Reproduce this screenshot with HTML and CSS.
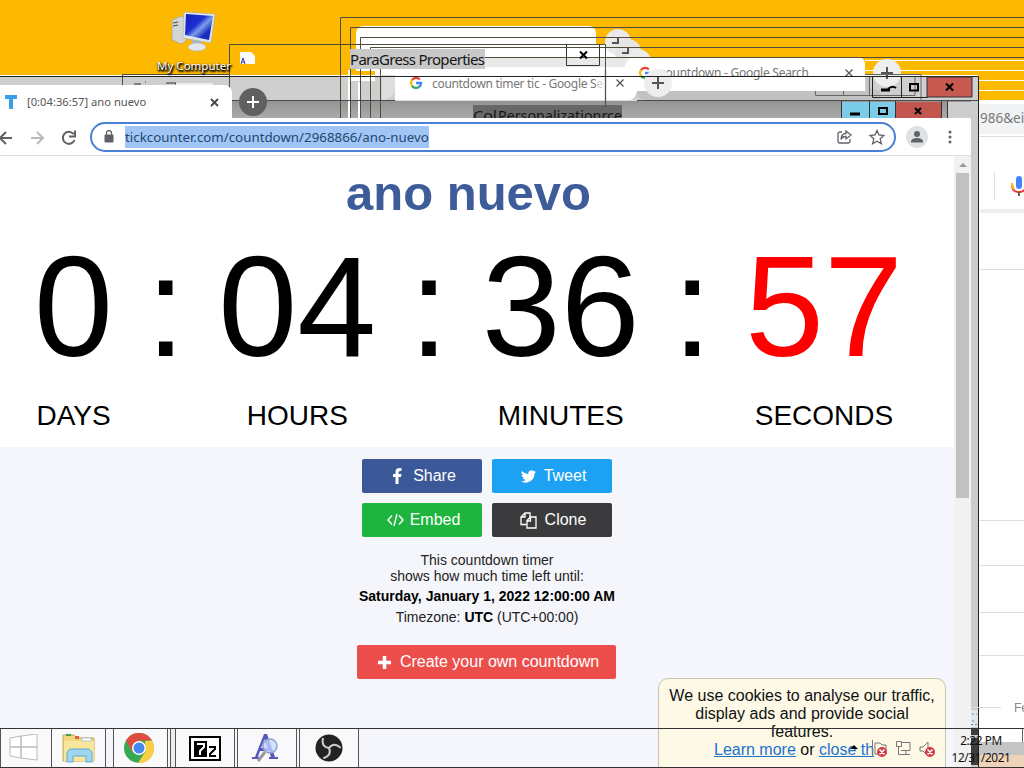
FILE: index.html
```html
<!DOCTYPE html>
<html lang="en">
<head>
<meta charset="utf-8">
<title>ano nuevo</title>
<link rel="stylesheet" href="styles.css">
</head>
<body>
<div class="desktop">
  <!-- Overlapping window frames -->
  <svg class="frames" width="1024" height="768" viewBox="0 0 1024 768">
    <defs>
      <linearGradient id="bar" x1="0" y1="0" x2="0" y2="1"><stop offset="0" stop-color="#949494"/><stop offset="1" stop-color="#aaa"/></linearGradient>
      <g id="google" fill="none" stroke-width="2.3"><path d="M9.8 2.500A5 5 0 0 0 2 3.200" stroke="#ea4335"/><path d="M2 3.200a5 5 0 0 0 0 5.600" stroke="#fbbc05"/><path d="M2 8.800a5 5 0 0 0 7 1.200" stroke="#34a853"/><path d="M9 10a5 5 0 0 0 2-4H6" stroke="#4285f4"/></g>
    </defs>
    <path d="M0 77H978V101H0z" fill="#cfcfcf"/>
    <path d="M0 101H971V118H0z" fill="url(#bar)"/>
    <path d="M971 101h7v667h-7z" fill="#ccc"/>
    <path d="M979 100h45v668h-45z" fill="#fff"/>
    <path d="M979 104h45v30h-45z" fill="#f1f3f4"/>
    <path d="M0 75.500H978M865 60.500h159M865 70.500h159M979 80.500h45M979 90.500h45" stroke="#fff"/>
    <path d="M356 76V34q0-8 8-8H588q8 0 8 8v11h35v32z" fill="#fff"/>
    <circle cx="618" cy="42" r="13" fill="#eaeaea"/><circle cx="628" cy="52" r="13" fill="#e5e5e5"/><circle cx="638" cy="62" r="13" fill="#ececec"/>
    <path d="M480 57h145v10H480z" fill="#e9e9e9"/>
    <path d="M612 43h6v-5M622 53h6v-5" fill="none" stroke="#555" stroke-width="2"/>
    <path d="M395 100V75q0-8 8-8H625q2-10 10-10H857q8 0 8 8v26H637q-2 9-8 9z" fill="#fff"/>
    <path d="M637 91H866v-15q4 0 4 12l10 3v9H644q-7-1-7-9z" fill="#c2c2c2"/>
    <path d="M348 70h2v48h-2zM358 82h2v36h-2zM350 77h25v4h-25z" fill="#fff"/>
    <path d="M350 71h25v4h-25z" fill="#fdb900"/>
    <path d="M382 75h13v16q-5 9-13 9z" fill="#ddd"/>
    <path d="M122.500 118V74.500H229M229.500 118V44.500H605.500V107M340.500 118V17.500H1024M350.500 118V27.500H1024M360.500 118V37.500H1024M370.500 118V47.500H1024M380.500 118V57.500H865" fill="none" stroke="#514b3c"/>
    <path d="M865 57.500h159" stroke="#514b3c"/>
    <path d="M229 100.500H395M637 100.500H978" stroke="#4b4b4b"/>
    <path d="M395 100.500H637" stroke="#ddd"/>
    <path d="M134 84h7m4-2h1M166 83h10v3h-10" fill="none" stroke="#333"/><path d="M176 83h37v3h-37z" fill="#eee"/>
    <path d="M350 49h135v20H350z" fill="#c8c8c8"/>
    <text x="350" y="65" class="frame-title" textLength="135">ParaGress Properties</text>
    <path d="M473 105h149v14H473z" fill="#686868"/>
    <text x="473" y="121" class="frame-title" textLength="24" lengthAdjust="spacingAndGlyphs">Col</text><text x="498" y="121" class="frame-title" textLength="124" lengthAdjust="spacingAndGlyphs">Personalizationrce</text>
    <path d="M566.500 45v20.500h33V45" fill="none" stroke="#333"/><path d="M580 51.500l7 7m0-7l-7 7" stroke="#000" stroke-width="2"/>
    <use href="#google" x="410" y="77"/><text x="432" y="88" class="tab-text" textLength="171">countdown timer tic - Google Se</text>
    <path d="M596 74h8v17h-8z" fill="#fff" opacity=".65"/>
    <path d="M605.500 70v37M616.500 79.500l7 7m0-7l-7 7M845.500 69.500l7 7m0-7l-7 7" stroke="#555" stroke-width="1.300"/>
    <use href="#google" x="639" y="67"/><text x="660" y="77" class="tab-text" textLength="149">countdown - Google Search</text>
    <path d="M650 76h17v-8h-17z" fill="#fff" opacity=".6"/>
    <circle cx="658" cy="83" r="14" fill="#eee"/><circle cx="887" cy="73" r="14" fill="#eee"/><path d="M652 83h12m-6-6v12M881 73h12m-6-6v12" stroke="#555" stroke-width="2"/>
    <path d="M815.500 91v4.500H915V77M843.500 91v5M869.500 76v20M865 74.500h56V101" fill="none" stroke="#666"/>
    <path d="M0 76.500H978.500V768" fill="none" stroke="#222"/>
    <path d="M872.500 77v20.500h55V77m-26 0v20" fill="none" stroke="#222"/><path d="M927 77h45v20h-45z" fill="#c65950" stroke="#333"/>
    <path d="M881 90h9" stroke="#000" stroke-width="3"/><path d="M888 89q4-4 8-1" fill="none" stroke="#000" stroke-width="2"/><path d="M910 84h8v6.500h-8z" fill="none" stroke="#000" stroke-width="2"/><path d="M946 83.500l7 7m0-7l-7 7" stroke="#000" stroke-width="2"/>
    <path d="M842 102h54v16h-54z" fill="#7bcce8"/><path d="M896 102h46v16h-46z" fill="#c2564e"/><path d="M841.500 101v17m28-17v17m26-17v17m46-17v17m6-17v17" stroke="#333"/>
    <path d="M948 102h30v16h-30z" fill="#cdcdcd"/>
    <path d="M850 114h10" stroke="#000" stroke-width="3"/><path d="M879 108h8v6h-8z" fill="none" stroke="#000" stroke-width="2"/><path d="M915 108l6 6m0-6l-6 6" stroke="#000" stroke-width="2"/>
    <circle cx="253" cy="102" r="14" fill="#606060"/><path d="M247 102h12m-6-6v12" stroke="#fff" stroke-width="2"/>
    <path d="M240 52h11l4 4v8h-15z" fill="#fafafa"/><path d="M241 64l2-6 2 6m-3-2h3" stroke="#3c3caa" fill="none"/>
    <!-- Search page peeking out on the right -->
    <text x="980" y="123" class="side-url">986&amp;ei</text>
    <path d="M980 136.500h44M980 269.500h44M980 520.500h44M980 565.500h44M980 612.500h44M980 655.500h44M972 707.500h29" stroke="#ddd"/>
    <path d="M994.500 172v28" stroke="#ddd"/><path d="M980 209h44v4h-44z" fill="#eee"/>
    <path d="M1012 185q0 7 7 7t7-7" fill="none" stroke="#ea4335" stroke-width="2"/><path d="M1012 183q0 4 2 6" fill="none" stroke="#fbbc05" stroke-width="2"/><path d="M1019 192v4" stroke="#795548" stroke-width="2"/><rect x="1016" y="176" width="6" height="13" rx="3" fill="#4285f4"/>
    <text x="1014" y="712" class="side-label">Fe</text>
    <path d="M971 710h7v17h-7z" fill="#dfe7ea"/><path d="M972 714h5M972 721h4M971 724.500h7" stroke="#789" stroke-dasharray="2 2"/>
    <path d="M971 729h7v6h-7zM971 738h7v27h-7z" fill="#3c3c3c"/>
    <path d="M979 742h45v13h-45z" fill="#c5c5c5"/><path d="M979 755h45v12h-45z" fill="#efd2b8"/><path d="M1022.500 729v13" stroke="#666"/>
  </svg>

  <div class="computer">
    <svg width="46" height="42" viewBox="0 0 46 42"><defs><linearGradient id="screen" x1="0" y1="0" x2="1" y2="1"><stop stop-color="#1521ba"/><stop offset=".4" stop-color="#1c2fd0"/><stop offset=".55" stop-color="#7c9cec"/><stop offset=".75" stop-color="#1b2cbd"/></linearGradient></defs><path d="M1 9l9-4 5 3v22l-5 3-9-4z" fill="#d4d4d0" stroke="#999" stroke-width=".6"/><path d="M2 12l5-1M2 15l5-1" stroke="#444"/><path d="M20 28l10 2 1 6h-9z" fill="#aeb5c0"/><ellipse cx="26" cy="36" rx="9" ry="4" fill="#e4e8ee" stroke="#aaa" stroke-width=".5"/><path d="M13 1l31 2-4 29-28-5z" fill="#dfe5ee" stroke="#9aa" stroke-width=".5"/><path d="M15 3l27 2-4 24-24-5z" fill="url(#screen)"/></svg>
    <span>My Computer</span>
  </div>

  <div class="tab">
    <svg width="12" height="14" viewBox="0 0 12 14"><path d="M0 0h12v4H8v10H4V4H0z" fill="#3b9ee8"/></svg>
    <span>[0:04:36:57] ano nuevo</span>
    <svg class="close" width="9" height="9" viewBox="0 0 9 9"><path d="M1 1l7 7m0-7L1 8" stroke="#444" stroke-width="1.800"/></svg>
  </div>

  <main class="browser">
    <div class="toolbar">
      <svg width="84" height="36" viewBox="0 0 84 36" fill="none" stroke="#5f6368" stroke-width="2"><path d="M12 19H0m6-6l-6 6 6 6"/><path d="M31 19h12m-6-6l6 6-6 6" stroke="#b9bbbd"/><path d="M73.500 15a6 6 0 1 0 1 6M75 11.500v6h-6"/></svg>
      <div class="address">
        <svg width="10" height="13" viewBox="0 0 10 13"><path d="M1 5h8v7H1z" fill="#5f6368" stroke="#5f6368" stroke-linejoin="round"/><path d="M2.500 5V3a2.500 2.500 0 0 1 5 0v2" fill="none" stroke="#5f6368" stroke-width="1.300"/></svg>
        <span class="url">tickcounter.com/countdown/2968866/ano-nuevo</span>
        <svg class="actions" width="48" height="16" viewBox="0 0 48 16" fill="none" stroke="#5f6368" stroke-width="1.300"><path d="M5 3H3Q1 3 1 5v7q0 2 2 2h8q2 0 2-2v-2"/><path d="M9 2l5 4-5 4V7.500q-4 0-5 3 0-6 5-6z"/><path d="M40 1.500l2 4.500 5 .5-3.800 3.300 1.200 5-4.400-2.600-4.400 2.600 1.200-5L33 6.500l5-.5z"/></svg>
      </div>
      <svg width="22" height="22" viewBox="0 0 22 22"><circle cx="11" cy="11" r="11" fill="#dfe1e5"/><circle cx="11" cy="8" r="3" fill="#5f6368"/><path d="M5 16.500v-1.500q1-3 6-3t6 3v1.500z" fill="#5f6368"/></svg>
      <svg class="menu" width="4" height="14" viewBox="0 0 4 14" fill="#5f6368"><circle cx="2" cy="2" r="1.500"/><circle cx="2" cy="7" r="1.500"/><circle cx="2" cy="12" r="1.500"/></svg>
    </div>
    <div class="viewport">
      <div class="page">
        <section class="counter">
          <h1>ano nuevo</h1>
          <div class="clock">
            <div class="unit"><b>0</b><span>DAYS</span></div><i>:</i>
            <div class="unit"><b>04</b><span>HOURS</span></div><i>:</i>
            <div class="unit"><b>36</b><span>MINUTES</span></div><i>:</i>
            <div class="unit seconds"><b>57</b><span>SECONDS</span></div>
          </div>
        </section>
        <section class="details">
          <div class="buttons">
            <a class="btn share"><svg width="10" height="16" viewBox="0 0 10 16" fill="#fff"><path d="M9.500 0v3H8Q6.500 3 6.500 4.500V6h3L9 9H6.500v7h-3V9H1V6h2.500V4Q3.500 0 7.500 0z"/></svg>Share</a>
            <a class="btn tweet"><svg width="15" height="13" viewBox="0 0 24 20" fill="#fff"><path d="M24 2.400a9.900 9.900 0 0 1-2.800.8A4.900 4.900 0 0 0 23.300.5a9.800 9.800 0 0 1-3.100 1.200 4.900 4.900 0 0 0-8.400 4.500A14 14 0 0 1 1.700 1 4.900 4.900 0 0 0 3.200 7.600 4.900 4.900 0 0 1 1 7a4.900 4.900 0 0 0 3.900 4.900 5 5 0 0 1-2.200.1 4.900 4.900 0 0 0 4.600 3.400A9.900 9.900 0 0 1 0 17.500a14 14 0 0 0 21.500-12.500A10 10 0 0 0 24 2.400z"/></svg>Tweet</a>
            <a class="btn embed"><svg width="17" height="12" viewBox="0 0 17 12" fill="none" stroke="#fff" stroke-width="1.400"><path d="M5 1.500L1 6l4 4.500M12 1.500L16 6l-4 4.500M10 0L7 12"/></svg>Embed</a>
            <a class="btn clone"><svg width="17" height="17" viewBox="0 0 17 17" fill="none" stroke="#fff" stroke-width="1.300"><path d="M6.500 12.500H1V5l4-4h5v4M5 1v4H1"/><path d="M7 8.500L10.500 5H16v11H7zM10.500 5v4H7"/></svg>Clone</a>
          </div>
          <p class="info">This countdown timer<br>shows how much time left until:</p>
          <p class="date">Saturday, January 1, 2022 12:00:00 AM</p>
          <p class="zone">Timezone: <strong>UTC</strong> (UTC+00:00)</p>
          <a class="btn create"><svg width="13" height="13" viewBox="0 0 13 13"><path d="M6.500 0v13M0 6.500h13" stroke="#fff" stroke-width="3.500"/></svg>Create your own countdown</a>
        </section>
      </div>
      <div class="scrollbar"><svg width="8" height="4" viewBox="0 0 8 4"><path d="M0 4l4-4 4 4z" fill="#999"/></svg><div class="thumb"></div></div>
    </div>
  </main>

  <aside class="cookies">We use cookies to analyse our traffic, display ads and provide social features.<div class="links"><a>Learn more</a> or <a>close th</a></div></aside>

  <footer class="taskbar">
    <div class="task start"><svg width="30" height="28" viewBox="0 0 30 28" fill="#fff" stroke="#bbb"><path d="M1 4l11-2v11H1zM12 2l16-2v13H12zM1 13h11v11L1 22zM12 13h16v13l-16-2z"/></svg></div>
    <div class="task files"><svg width="34" height="32" viewBox="0 0 34 32"><path d="M1 3h11l3 3h17v23H1z" fill="#f2d87c" stroke="#c9a648"/><path d="M2 9h30v20H2z" fill="#fae69b"/><path d="M4 2h5v2H4z" fill="#4d9c52"/><path d="M13 4h4v3h-4z" fill="#d96245"/><path d="M20 6h9v3h-9z" fill="#fff" stroke="#6da1cf" stroke-width=".5"/><path d="M5 29V20l3-3h19l3 3v10h-6v-6H11v6H5z" fill="#9fd7ef" stroke="#5fa9cd"/></svg></div>
    <div class="task chrome"><svg width="30" height="30" viewBox="0 0 30 30"><circle cx="15" cy="15" r="15" fill="#39a852"/><path d="M2 7.500A15 15 0 0 1 28 7.500H15L8.500 19z" fill="#df4d40"/><path d="M28 7.500A15 15 0 0 1 14 30l7.500-11.500L21 8z" fill="#fbce43"/><circle cx="15" cy="15" r="7" fill="#fff"/><circle cx="15" cy="15" r="5.500" fill="#4688ed"/></svg></div>
    <div class="task zip"><svg width="32" height="25" viewBox="0 0 32 25"><path d="M1 1h30v23H1z" fill="#fff" stroke="#000" stroke-width="2"/><path d="M5 5h13v16H5z"/><path d="M8 8h7v3l-4 4v4" fill="none" stroke="#fff" stroke-width="2"/><path d="M20 11h6v2l-5 5v2h6" fill="none" stroke="#000" stroke-width="2"/></svg></div>
    <div class="task search"><svg width="28" height="30" viewBox="0 0 28 30"><path d="M13 1h3l8 23h3v2h-9v-2h2l-2-6H9l-2 6h3v2H1v-2h3z" fill="#5757c2"/><path d="M10 15h7l-3.500-9z" fill="#e6e8ff"/><circle cx="19" cy="13" r="7" fill="#c5daff" fill-opacity=".75" stroke="#91a1ce" stroke-width="1.500"/><path d="M14 19L7 28" stroke="#999" stroke-width="3"/></svg></div>
    <div class="task obs"><svg width="28" height="28" viewBox="0 0 28 28"><circle cx="14" cy="14" r="13.500" fill="#222"/><g fill="none" stroke="#ccc" stroke-width="2"><path id="blade" d="M14 14Q6 13 8 4"/><use href="#blade" transform="rotate(120 14 14)"/><use href="#blade" transform="rotate(240 14 14)"/></g></svg></div>
    <div class="tray"><svg width="92" height="18" viewBox="0 0 92 18"><path d="M0 9l4-4 4 4z"/><g fill="none" stroke="#777"><path d="M22.500 0v17M25 3h5l2 2h4v9H25z"/><path d="M46.500 1.500h5v5h-5zM52 2.500h8v8h-9M48.500 7v7.500h6M56 11v3m-3 .5h7"/><path d="M70 7h3l5-5v14l-5-5h-3z"/></g><g fill="#cf3942"><circle cx="32" cy="12" r="5"/><circle cx="80" cy="12" r="5"/></g><path d="M29.500 9.500l5 5m0-5l-5 5M77.500 9.500l5 5m0-5l-5 5" stroke="#fff" stroke-width="1.500"/></svg></div>
    <div class="time"><span>2:22 PM</span><span>12/31/2021</span></div>
  </footer>
</div>
</body>
</html>
```

FILE: styles.css
```css
* { box-sizing: border-box; }
body { margin: 0; font-family: "Liberation Sans", Arial, sans-serif; }
.desktop { position: relative; width: 1024px; height: 768px; overflow: hidden; background: #fdb900; }
.desktop svg { display: block; flex: none; }
.frames { position: absolute; left: 0; top: 0; }
.frame-title { font: 15px "Noto Sans", sans-serif; fill: #151515; }
.tab-text { font: 12px "Noto Sans", sans-serif; fill: #777; }
.side-url { font: 13.5px "Noto Sans", sans-serif; fill: #777; }
.side-label { font: 12px "Liberation Sans", sans-serif; fill: #888; }

.computer { position: absolute; left: 154px; top: 11px; width: 80px; display: flex; flex-direction: column; align-items: center; gap: 5px; }
.computer span { font: 11.5px/16px "Noto Sans", sans-serif; color: #fff; white-space: nowrap; text-shadow: 1px 1px 2px #000, 0 1px 2px #000, 1px 2px 2px #000; }

.tab { position: absolute; left: 0; top: 85px; width: 232px; height: 34px; padding: 0 13px 0 5px; border-radius: 0 8px 0 0; background: #fff; display: flex; align-items: center; gap: 10px; }
.tab span { font: 11.2px/14px "Noto Sans", sans-serif; color: #555; white-space: nowrap; }
.tab .close { margin-left: auto; }

.browser { position: absolute; left: 0; top: 118px; width: 971px; height: 650px; display: flex; flex-direction: column; background: #fff; }
.toolbar { height: 38px; flex: none; display: flex; align-items: center; border-bottom: 1px solid #ddd; }
.address { width: 806px; height: 30px; margin: 0 10px 0 6px; padding: 0 9px 0 12px; border: 2px solid #4a7fd6; border-radius: 15px; display: flex; align-items: center; gap: 11px; }
.url { font: 13.32px/22px "Noto Sans", sans-serif; color: #26466d; background: #9fc6f6; white-space: nowrap; }
.actions { margin-left: auto; }
.menu { margin-left: 20px; }
.viewport { flex: 1; display: flex; min-height: 0; }
.page { flex: 1; background: #f5f6fb; }
.counter { height: 291px; padding: 12px 0 0 34px; background: #fff; }
.counter h1 { width: 869px; margin: 0; font-size: 49px; line-height: 50px; text-align: center; color: #3f5c9a; }
.clock { display: flex; width: 869px; justify-content: space-between; margin-top: 18px; }
.clock b, .clock i { font: 142px/142px "Liberation Sans", Arial, sans-serif; }
.unit { display: flex; flex-direction: column; align-items: center; gap: 24px; }
.unit span { font-size: 28px; line-height: 28px; }
.seconds b { color: red; }
.details { display: flex; flex-direction: column; align-items: center; padding: 12px 0 0 20px; font-size: 14px; line-height: 16px; text-align: center; color: #222; }
.buttons { display: grid; grid-template-columns: 120px 120px; gap: 10px; }
.btn { height: 34px; border-radius: 2px; display: flex; align-items: center; justify-content: center; gap: 8px; color: #fff; font-size: 16px; }
.share { padding-left: 4px; background: #3b5998; gap: 11px; }
.tweet { padding-left: 3px; background: #1da1f2; }
.embed { padding-left: 3px; background: #1db53e; gap: 6px; }
.clone { padding-left: 2px; background: #3b3b3d; }
.details p { margin: 0; }
.details .info { margin-top: 15px; }
.details .date { margin-top: 4px; font-weight: bold; color: #000; white-space: nowrap; }
.details .zone { margin-top: 5px; }
.details strong { color: #000; }
.create { width: 259px; margin: 20px 1px 0 0; padding-left: 4px; background: #ec4f4b; gap: 9px; }
.scrollbar { width: 17px; padding-top: 7px; background: #f1f1f1; display: flex; flex-direction: column; align-items: center; }
.thumb { width: 13px; height: 325px; margin-top: 6px; background: #c1c1c1; }

.cookies { position: absolute; left: 658px; top: 678px; width: 288px; height: 100px; padding: 8px 8px 0; border: 1px solid #c5c3ae; border-radius: 10px; background: #fdf9e6; font-size: 16px; line-height: 18px; text-align: center; color: #111; }
.cookies .links { padding-left: 47px; text-align: left; white-space: nowrap; }
.cookies a { color: #1b73cf; text-decoration: underline; }

.taskbar { position: absolute; left: 0; top: 728px; width: 1024px; height: 40px; display: flex; border-top: 1px solid #333; border-bottom: 1px solid #333; }
.taskbar::before { content: ""; position: absolute; z-index: -1; inset: 0; }
.task { display: flex; align-items: center; justify-content: center; border-right: 1px solid #555; background: #f9f9fb; }
.start { width: 52px; padding-right: 4px; border-left: 1px solid #555; }
.files { width: 54px; }
.chrome { width: 55px; margin-left: 7px; padding-right: 4px; border-left: 1px solid #555; }
.zip { width: 60px; margin-left: 7px; border-left: 1px solid #555; box-shadow: -4px 0 0 #eee, -5px 0 0 #555; }
.search { width: 60px; margin-left: 2px; padding-right: 4px; border-left: 1px solid #555; }
.obs { width: 60px; margin-left: 2px; border-left: 1px solid #555; }
.tray { margin-left: auto; padding: 11px 3px 0 0; }
.time { width: 72px; margin-right: 7px; padding-top: 3px; display: flex; flex-direction: column; align-items: center; font: 11.8px/17px "Noto Sans", sans-serif; color: #111; letter-spacing: -0.4px; }
```
